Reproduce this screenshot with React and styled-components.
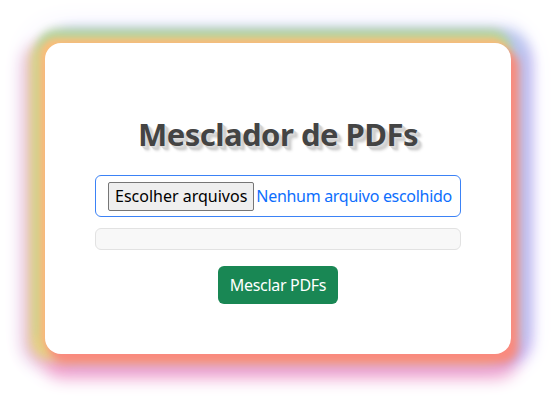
import React from 'react';
import styled, { createGlobalStyle } from 'styled-components';

const GlobalStyle = createGlobalStyle`
    html, body {
        margin: 0;
        background: #ffffff;
        font-family: "Noto Sans", "Liberation Sans", sans-serif;
    }
`

const Page = styled.main`
    min-height: 100vh;
    box-sizing: border-box;
    display: flex;
    justify-content: center;
    align-items: flex-start;
    padding: 43px 41px 0 45px;
`

// stacked coloured glows, first one sits on top
const Card = styled.section`
    width: 466px;
    box-sizing: border-box;
    padding: 0 50px 50px;
    background: #fff;
    border-radius: 16px;
    display: flex;
    flex-direction: column;
    align-items: center;
    box-shadow:
        6px 8px 8px 2px #f98a7e,
        -4px -3px 6px 2px #f9bf7c,
        -4px -10px 10px 4px #b6d69c,
        -11px 2px 11px 4px #e6d382,
        10px -8px 14px 6px #b8c6ee,
        14px 4px 14px 6px #c6b4f2,
        2px 20px 16px 4px #f2a2cc,
        -17px 6px 16px 6px #e8c0dc,
        0 0 32px 16px #f3efff;
`

const Title = styled.h1`
    margin: 72px 0 22px;
    font-size: 31px;
    line-height: 38px;
    font-weight: 700;
    letter-spacing: -0.5px;
    color: #444;
    text-shadow:
        1px 1px 0 #dcdcdc,
        2px 2px 0 #d6d6d6,
        3px 3px 1px #d0d0d0,
        4px 4px 2px #d0d0d0,
        5px 5px 3px rgba(0, 0, 0, 0.1);
`

const FileBox = styled.div`
    align-self: stretch;
    display: flex;
    align-items: center;
    gap: 2px;
    height: 42px;
    box-sizing: border-box;
    padding: 0 12px;
    border: 1px solid #3b82f6;
    border-radius: 6px;
    letter-spacing: -0.3px;
`

const PickButton = styled.button`
    flex-shrink: 0;
    white-space: nowrap;
    height: 29px;
    padding: 0 6px;
    font: inherit;
    font-size: 16px;
    color: #000;
    background: #efefef;
    border: 1px solid #767676;
    border-radius: 2px;
`

const FileName = styled.span`
    font-size: 16px;
    color: #0d6efd;
    white-space: nowrap;
`

const Progress = styled.div`
    align-self: stretch;
    margin-top: 11px;
    height: 22px;
    box-sizing: border-box;
    background: #f8f8f8;
    border: 1px solid #e2e2e2;
    border-radius: 6px;
`

const MergeButton = styled.button`
    margin-top: 16px;
    height: 38px;
    padding: 0 12px;
    font: inherit;
    font-size: 16px;
    letter-spacing: -0.3px;
    color: #fff;
    background: #198754;
    border: none;
    border-radius: 6px;
`

export default function App() {
    return (
        <Page>
            <GlobalStyle />
            <Card>
                <Title>Mesclador de PDFs</Title>
                <FileBox>
                    <PickButton>Escolher arquivos</PickButton>
                    <FileName>Nenhum arquivo escolhido</FileName>
                </FileBox>
                <Progress />
                <MergeButton>Mesclar PDFs</MergeButton>
            </Card>
        </Page>
    )
}
